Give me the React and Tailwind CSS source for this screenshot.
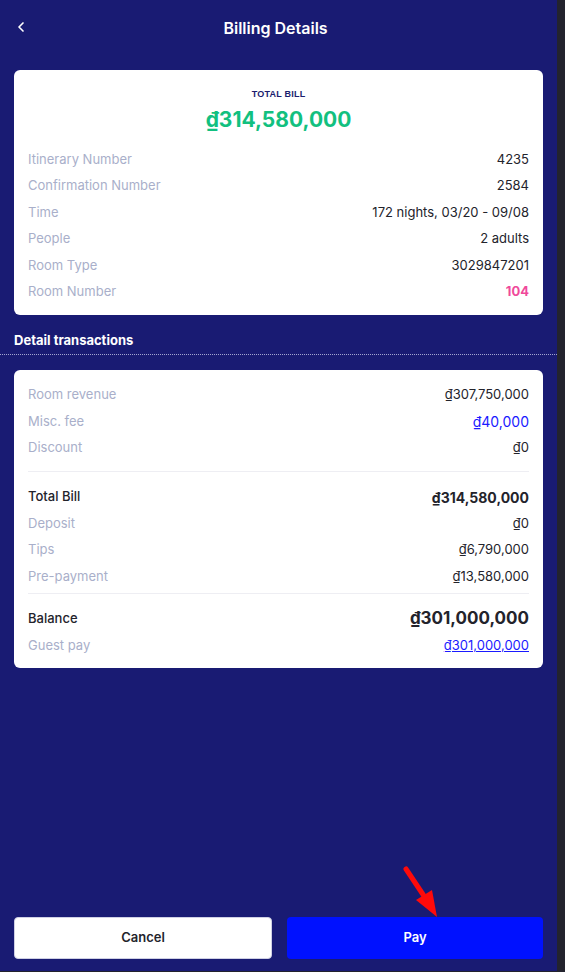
import { ChevronLeft } from 'lucide-react';

const font = { fontFamily: 'Inter, "Noto Sans", sans-serif' };

function Row({ label, value, valueClass = 'text-[#23232b]', labelClass = 'text-[#a9afca]', h = 'h-[26.4px]' }) {
    return (
        <div className={`flex items-center justify-between ${h}`}>
            <span className={`text-[13px] ${labelClass}`}>{label}</span>
            <span className={`text-[13px] ${valueClass}`}>{value}</span>
        </div>
    );
}

export default function App() {
    return (
        <div className="flex h-[972px] w-full bg-[#23232e]" style={font}>
            <div className="relative flex h-[971px] flex-1 flex-col bg-[#191b73]">
                {/* header */}
                <div className="relative flex h-[56px] items-center justify-center">
                    <ChevronLeft className="absolute left-[13px] top-[19px] text-white" size={16} strokeWidth={2.5} />
                    <h1 className="mr-[6px] text-[16px] font-semibold text-white">Billing Details</h1>
                </div>

                <div className="px-[14px] pt-[14px]">
                    <div className="rounded-md bg-white px-[14px] pb-[10px] pt-[17px]">
                        <p className="text-center text-[9px] font-bold leading-[14px] tracking-wide text-[#1b1d6e]" style={{ fontFamily: '"Liberation Sans", Arial, sans-serif' }}>TOTAL BILL</p>
                        <p className="mt-[5px] text-center text-[21px] font-bold leading-[28px] text-[#12c07f]">₫314,580,000</p>
                        <div className="mt-[12.5px]">
                            <Row label="Itinerary Number" value="4235" />
                            <Row label="Confirmation Number" value="2584" />
                            <Row label="Time" value="172 nights, 03/20 - 09/08" />
                            <Row label="People" value="2 adults" />
                            <Row label="Room Type" value="3029847201" />
                            <Row label="Room Number" value="104" valueClass="font-bold text-[#f0499b]" />
                        </div>
                    </div>
                </div>

                <p className="mt-[17px] px-[14px] text-[13px] font-bold leading-[16px] text-white">Detail transactions</p>
                <div className="mt-[6px] border-t border-dotted border-[#a4a6d0]"></div>

                <div className="px-[14px] pt-[15px]">
                    <div className="rounded-md bg-white px-[14px] pb-[9px] pt-[12px]">
                        <Row label="Room revenue" value="₫307,750,000" />
                        <Row label="Misc. fee" value="₫40,000" valueClass="text-[14px] text-[#1a1aff]" />
                        <Row label="Discount" value="₫0" />
                        <div className="mt-[9.5px] border-t border-[#eeeef3]"></div>
                        <div className="mt-[12.5px]">
                            <Row label="Total Bill" labelClass="text-[#23232b] font-medium" value="₫314,580,000" valueClass="text-[14px] font-bold text-[#23232b]" />
                            <Row label="Deposit" value="₫0" />
                            <Row label="Tips" value="₫6,790,000" />
                            <Row label="Pre-payment" value="₫13,580,000" />
                        </div>
                        <div className="mt-[3px] border-t border-[#eeeef3]"></div>
                        <div className="mt-[11px]">
                            <div className="flex h-[28px] items-center justify-between">
                                <span className="text-[13px] font-medium text-[#23232b]">Balance</span>
                                <span className="text-[17px] font-bold text-[#23232b]">₫301,000,000</span>
                            </div>
                            <Row label="Guest pay" value="₫301,000,000" valueClass="text-[#1a1aff] underline" />
                        </div>
                    </div>
                </div>

                {/* footer buttons */}
                <div className="mt-auto flex gap-[15px] px-[14px] pb-[12px]">
                    <button className="h-[42px] flex-1 rounded border border-[#cfd0e4] bg-white text-[13px] font-semibold text-[#23232b]">Cancel</button>
                    <button className="h-[42px] flex-1 rounded bg-[#0011ff] text-[13px] font-semibold text-white">Pay</button>
                </div>

                {/* annotation arrow */}
                <svg className="absolute left-[398px] top-[862px]" width="48" height="60" viewBox="0 0 48 60">
                    <line x1="8" y1="7" x2="30" y2="40" stroke="#ff0a0a" strokeWidth="5" strokeLinecap="round" />
                    <polygon points="39,55 18,38 34,28" fill="#ff0a0a" />
                </svg>
            </div>
            <div className="w-[8px]"></div>
        </div>
    );
}
